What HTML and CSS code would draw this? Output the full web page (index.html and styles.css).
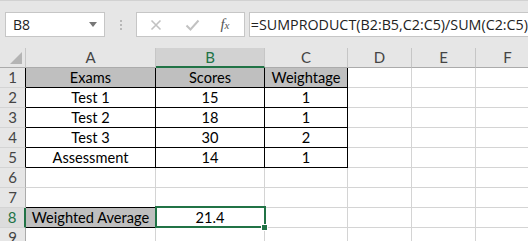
FILE: index.html
```html
<!DOCTYPE html>
<html lang="en">
<head>
    <meta charset="UTF-8">
    <title>Weighted Average</title>
    <link rel="stylesheet" href="styles.css">
</head>
<body>

<div class="toolbar">
    <div class="namebox">
        <span>B8</span>
        <svg class="caret" width="8" height="5" viewBox="0 0 8 5"><path d="M0 0H8L4 5Z" fill="#777"/></svg>
    </div>
    <div class="grip"><i></i><i></i><i></i></div>
    <div class="fxbox">
        <svg width="12" height="12" viewBox="0 0 12 12"><path d="M1.5 1.5L10.5 10.5M10.5 1.5L1.5 10.5" stroke="#c2c2c2" stroke-width="1.6"/></svg>
        <svg width="15" height="12" viewBox="0 0 15 12"><path d="M1.5 6.5L5.5 10.5L13.5 1.5" stroke="#c2c2c2" stroke-width="2" fill="none"/></svg>
        <span class="fx">f<sub>x</sub></span>
    </div>
    <div class="formula">=SUMPRODUCT(B2:B5,C2:C5)/SUM(C2:C5)</div>
</div>

<div class="sheet">
    <div class="corner"><span class="tri"></span></div>
    <div class="colhead">A</div>
    <div class="colhead sel">B</div>
    <div class="colhead">C</div>
    <div class="colhead">D</div>
    <div class="colhead">E</div>
    <div class="colhead">F</div>

    <div class="rowhead edge">1</div>
    <div class="cell box top head">Exams</div>
    <div class="cell box top head">Scores</div>
    <div class="cell box top head">Weightage</div>
    <div class="cell"></div><div class="cell"></div><div class="cell"></div>

    <div class="rowhead edge">2</div>
    <div class="cell box">Test 1</div>
    <div class="cell box">15</div>
    <div class="cell box">1</div>
    <div class="cell"></div><div class="cell"></div><div class="cell"></div>

    <div class="rowhead edge">3</div>
    <div class="cell box">Test 2</div>
    <div class="cell box">18</div>
    <div class="cell box">1</div>
    <div class="cell"></div><div class="cell"></div><div class="cell"></div>

    <div class="rowhead edge">4</div>
    <div class="cell box">Test 3</div>
    <div class="cell box">30</div>
    <div class="cell box">2</div>
    <div class="cell"></div><div class="cell"></div><div class="cell"></div>

    <div class="rowhead edge">5</div>
    <div class="cell box">Assessment</div>
    <div class="cell box">14</div>
    <div class="cell box">1</div>
    <div class="cell"></div><div class="cell"></div><div class="cell"></div>

    <div class="rowhead">6</div>
    <div class="cell"></div><div class="cell"></div><div class="cell"></div>
    <div class="cell"></div><div class="cell"></div><div class="cell"></div>

    <div class="rowhead">7</div>
    <div class="cell closed"></div><div class="cell"></div><div class="cell"></div>
    <div class="cell"></div><div class="cell"></div><div class="cell"></div>

    <div class="rowhead selrow">8</div>
    <div class="cell box head">Weighted Average</div>
    <div class="cell active">21.4</div>
    <div class="cell"></div>
    <div class="cell"></div><div class="cell"></div><div class="cell"></div>

    <div class="rowhead">9</div>
    <div class="cell"></div><div class="cell"></div><div class="cell"></div>
    <div class="cell"></div><div class="cell"></div><div class="cell"></div>
</div>

</body>
</html>
```

FILE: styles.css
```css
body {
    margin: 0;
    background-color: #fff;
    font-family: Lato, "Liberation Sans", sans-serif;
    overflow: hidden;
}

/* formula bar */
.toolbar {
    display: flex;
    align-items: flex-start;
    height: 48px;
    box-sizing: border-box;
    padding-top: 12px;
    background-color: #e6e6e6;
    border-top: 1px solid #d2d2d2;
    white-space: nowrap;
    overflow: hidden;
}

.namebox {
    display: flex;
    align-items: center;
    justify-content: space-between;
    width: 101px;
    height: 25px;
    box-sizing: border-box;
    margin-top: -1px;
    margin-left: 5px;
    padding: 0 7px 0 7px;
    background: #fff;
    border: 1px solid #c6c6c6;
    font-family: "Open Sans", sans-serif;
    font-size: 14px;
    color: #222;
}

.grip {
    display: flex;
    flex-direction: column;
    gap: 2px;
    width: 2px;
    margin: 7px 14px 0 15px;
}

.grip i {
    display: block;
    width: 2px;
    height: 2px;
    background: #b8b8b8;
}

.fxbox {
    display: flex;
    align-items: center;
    width: 109px;
    height: 25px;
    box-sizing: border-box;
    margin-top: -1px;
    padding-left: 13px;
    gap: 23px;
    background: #fff;
    border: 1px solid #c6c6c6;
}

.fx {
    font-family: "Liberation Serif", serif;
    font-style: italic;
    font-size: 15px;
    color: #555;
    margin-left: -3px;
}

.fx sub {
    font-size: 11px;
    vertical-align: 0;
}

.formula {
    flex: 1;
    height: 25px;
    box-sizing: border-box;
    margin-top: -1px;
    margin-left: 4px;
    padding-left: 1px;
    background: #fff;
    border: 1px solid #c6c6c6;
    border-right: none;
    font-family: "Open Sans", sans-serif;
    font-size: 14.3px;
    line-height: 23px;
    color: #222;
}

/* sheet */
.sheet {
    display: grid;
    grid-template-columns: 26px 130px 109px 83px 64px 64px 64px;
    grid-template-rows: repeat(10, 20px);
    width: 540px;
}

.corner,
.colhead,
.rowhead {
    background-color: #e6e6e6;
    color: #444;
    font-size: 15px;
    text-align: center;
    line-height: 19px;
    box-sizing: border-box;
}

.corner {
    position: relative;
    border-right: 1px solid #c6c6c6;
    border-bottom: 1px solid #ababab;
}

.tri {
    position: absolute;
    right: 3px;
    bottom: 3px;
    width: 0;
    height: 0;
    border-left: 12px solid transparent;
    border-bottom: 12px solid #b4b4b4;
}

.colhead {
    border-right: 1px solid #c6c6c6;
    border-bottom: 1px solid #ababab;
}

.colhead.sel {
    background-color: #d2d2d2;
    color: #217346;
    border-bottom: 2px solid #217346;
}

.rowhead {
    border-right: 1px solid #ababab;
    border-bottom: 1px solid #d4d4d4;
}

.rowhead.edge {
    border-right-color: #000;
}

.rowhead.selrow {
    background-color: #dcdcdc;
    color: #217346;
    border-right: 2px solid #217346;
}

.cell {
    box-sizing: border-box;
    border-right: 1px solid #d4d4d4;
    border-bottom: 1px solid #d4d4d4;
    font-size: 14.6px;
    line-height: 19px;
    text-align: center;
    color: #000;
    white-space: nowrap;
}

.cell.box {
    border-right-color: #000;
    border-bottom-color: #000;
}

.cell.head {
    background-color: #bfbfbf;
}

.colhead.top,
.cell.closed {
    border-bottom-color: #000;
}

.cell.active {
    position: relative;
}

.cell.active::before {
    content: "";
    position: absolute;
    left: -1px;
    top: -2px;
    right: -2px;
    bottom: -1px;
    border: 2px solid #217346;
}

.cell.active::after {
    content: "";
    position: absolute;
    right: -4px;
    bottom: -4px;
    width: 5px;
    height: 5px;
    background: #217346;
    border: 1px solid #fff;
}
```
